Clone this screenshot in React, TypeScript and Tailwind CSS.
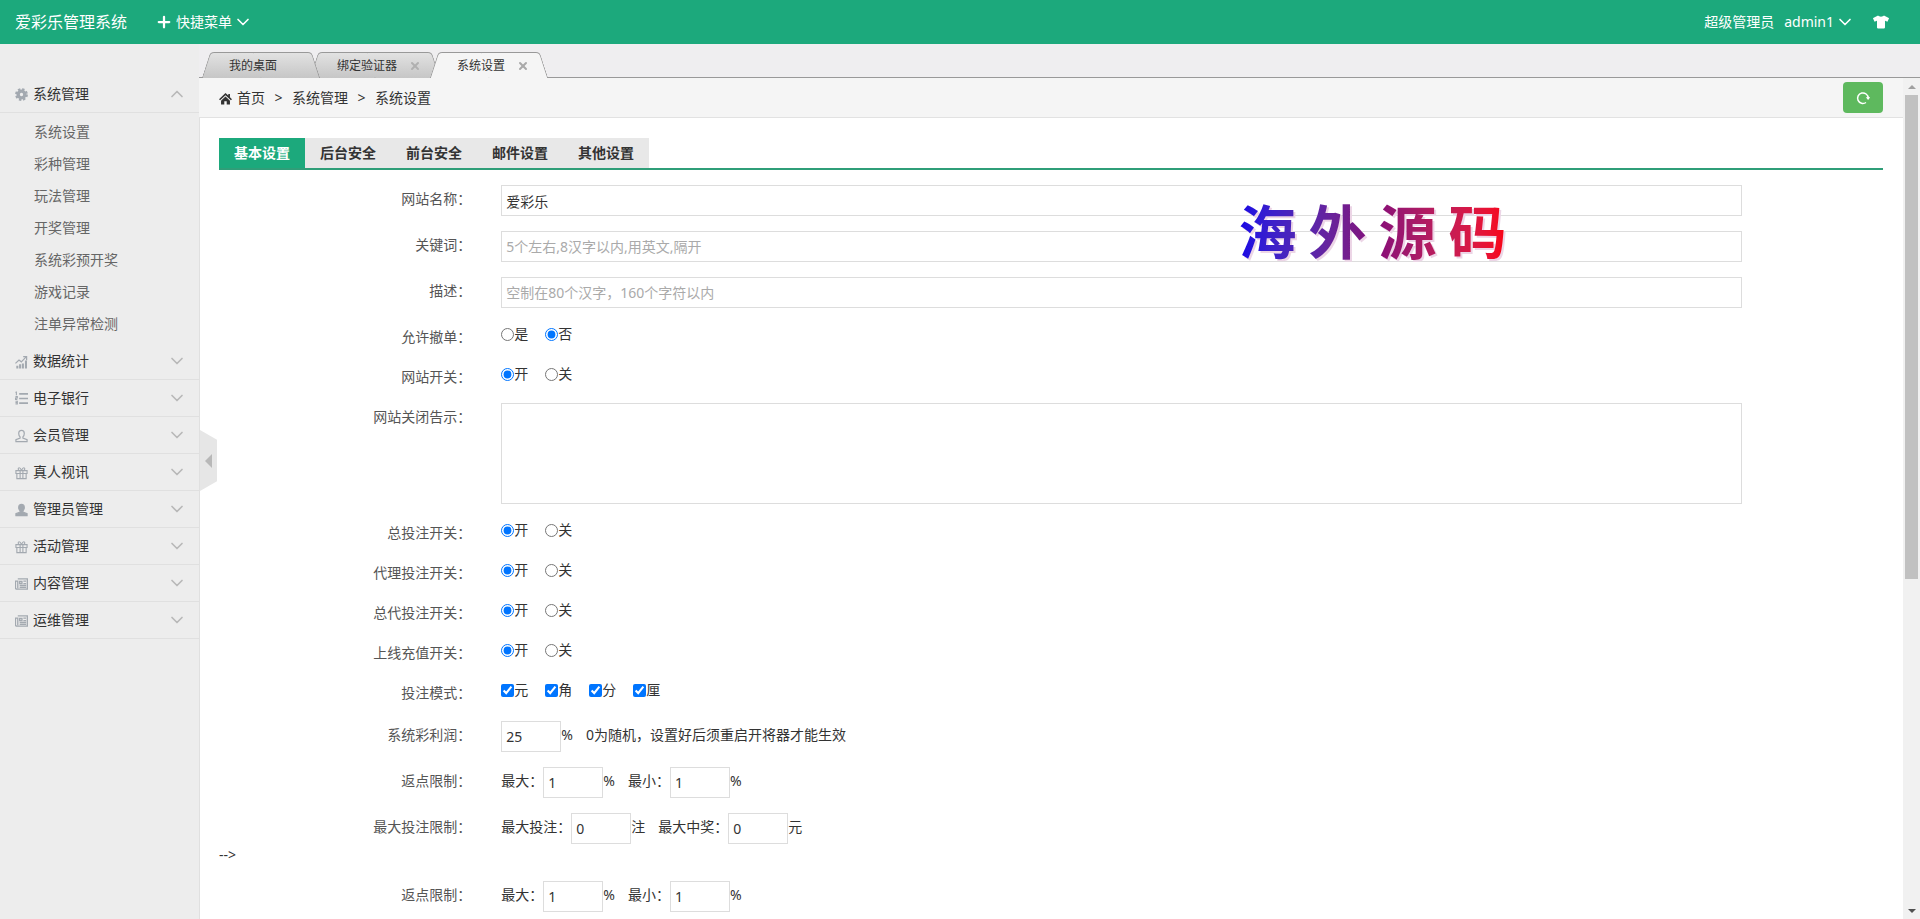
import React from "react";
import { ChevronDown, ChevronUp, Plus, X } from "lucide-react";
import { FaTshirt } from "react-icons/fa";

const submenu = ["系统设置", "彩种管理", "玩法管理", "开奖管理", "系统彩预开奖", "游戏记录", "注单异常检测"];

function GearIcon() {
  return (
    <svg viewBox="0 0 14 14" className="mt-px size-[13px]" fill="none" stroke="currentColor">
      <circle cx="7" cy="7" r="3.600" strokeWidth="3.600" />
      <circle cx="7" cy="7" r="5.800" strokeWidth="2.200" strokeDasharray="2.600 1.950" />
    </svg>
  );
}

function HomeIcon() {
  return (
    <svg viewBox="0 0 14 14" className="mt-px h-[13px] w-[13px]" fill="currentColor">
      <path d="M7 1 0 7.800l1.200 1.100L7 3.400l5.800 5.500L14 7.800l-2.200-2.100V2.200H10v1.700z" />
      <path d="M7 4.800 2.200 9.300V13.500H5.700V10h2.600v3.500h3.500V9.300z" />
    </svg>
  );
}

function StatsIcon() {
  return (
    <svg viewBox="0 0 14 14" className="mt-[2px] h-[14px] w-[13px]" fill="none" stroke="currentColor">
      <path d="M2.500 14v-3M5.500 14V9.500M8.500 14V8.500M11.800 14V5.500" strokeWidth="2.200" />
      <path d="M.5 8.500 4.300 4.800l2.500 2L12 1.500M8.800 1.200h3.700V5" strokeWidth="1.300" />
    </svg>
  );
}

function ListIcon() {
  return (
    <svg viewBox="0 0 14 14" className="h-[14px] w-[13px]" fill="none" stroke="currentColor">
      <path d="M4.500 2.500H14M4.500 7.500H14M4.500 12.500H14" strokeWidth="1.800" />
      <path d="M1.500 0v4M.5 1h1M.5 5.500h2v1.500h-2v1.500h2M.5 10.500h2v3h-2M.5 12h2" strokeWidth="1.200" />
    </svg>
  );
}

function UserIcon({ filled = false }: { filled?: boolean }) {
  return (
    <svg viewBox="0 0 14 14" className="mt-[2px] h-[14px] w-[13px]" fill={filled ? "currentColor" : "none"} stroke="currentColor" strokeWidth="1.300">
      <path d="M7 1C5 1 4 2.300 4 4.200c0 1.800.7 3 1.500 3.800v1.300L1 11v2h12v-2L8.500 9.300V8C9.300 7.200 10 6 10 4.200 10 2.300 9 1 7 1Z" />
    </svg>
  );
}

function GiftIcon() {
  return (
    <svg viewBox="0 0 14 14" className="mt-[2px] h-[14px] w-[13px]" fill="none" stroke="currentColor" strokeWidth="1.200">
      <path d="M1 4.500h12v3H1zM2 7.500h10V13H2zM5.500 4.500V13M8.500 4.500V13" />
      <path d="M7 4.300C6 1.800 5.300 1.300 4.500 1.300 3.200 1.300 3 3.500 4.500 4.300M7 4.300c1-2.500 1.700-3 2.500-3 1.300 0 1.500 2.200 0 3" />
    </svg>
  );
}

function NewsIcon() {
  return (
    <svg viewBox="0 0 14 14" className="mt-[2px] h-[14px] w-[13px]" fill="none" stroke="currentColor" strokeWidth="1.400">
      <path d="M3 1.500h10.300v11H2c-1 0-1.500-.5-1.500-1.500V4H3v7.500" />
      <path d="M5 4.300h2.500v2.200H5zM9 4h3M9 6.500h3M5 8.500h7M5 10.500h7" />
    </svg>
  );
}

const menus = [
  { title: "数据统计", icon: <StatsIcon /> },
  { title: "电子银行", icon: <ListIcon /> },
  { title: "会员管理", icon: <UserIcon /> },
  { title: "真人视讯", icon: <GiftIcon /> },
  { title: "管理员管理", icon: <UserIcon filled /> },
  { title: "活动管理", icon: <GiftIcon /> },
  { title: "内容管理", icon: <NewsIcon /> },
  { title: "运维管理", icon: <NewsIcon /> },
];

function Header() {
  return (
    <header className="flex h-11 shrink-0 items-center bg-[#1ca97c] pr-[31px] pl-[15px] text-white">
      <h1 className="text-base">爱彩乐管理系统</h1>
      <button className="ml-7 flex items-center">
        <Plus size={18} strokeWidth={3} />
        <span className="ml-[3px]">快捷菜单</span>
        <ChevronDown className="ml-px" size={20} strokeWidth={2} />
      </button>
      <div className="ml-auto flex items-center">
        <span>超级管理员</span>
        <button className="ml-[10px] flex items-center">
          admin1
          <ChevronDown className="ml-px" size={20} strokeWidth={2} />
        </button>
        <button className="ml-[18px]" aria-label="换肤">
          <FaTshirt size={16} />
        </button>
      </div>
    </header>
  );
}

function Sidebar() {
  return (
    <aside className="w-[200px] shrink-0 border-r border-[#e0e0e0] bg-[#ededed] pt-8">
      <button className="flex h-[37px] w-full items-center border-b border-[#e0e0e0] pr-3 pl-[15px]">
        <span className="text-[#a3a9b0]"><GearIcon /></span>
        <span className="ml-[5px]">系统管理</span>
        <ChevronUp className="ml-auto text-[#b8b8b8]" size={20} strokeWidth={2} />
      </button>
      <ul className="py-[3px]">
        {submenu.map((item) => (
          <li key={item}>
            <a href="#" className="block pl-[34px] leading-8 text-[#666]">{item}</a>
          </li>
        ))}
      </ul>
      {menus.map((menu) => (
        <button key={menu.title} className="flex h-[37px] w-full items-center border-b border-[#e0e0e0] pr-3 pl-[15px]">
          <span className="text-[#a3a9b0]">{menu.icon}</span>
          <span className="ml-[5px]">{menu.title}</span>
          <ChevronDown className="ml-auto text-[#b8b8b8]" size={20} strokeWidth={2} />
        </button>
      ))}
    </aside>
  );
}

type PageTabProps = { title: string; closable?: boolean; active?: boolean; first?: boolean };

function PageTab({ title, closable, active, first }: PageTabProps) {
  const fill = active
    ? "bg-[#f5f5f5] border-[#999]"
    : "bg-linear-to-b from-[#e2e2e2] to-[#c6c6c6] border-[#999]";
  return (
    <li className={`relative -mr-[10px] flex h-[26px] items-center pt-[2px] pl-[27px] text-xs ${first || active ? "z-10" : ""} ${closable ? "pr-[19px]" : "pr-[43px]"}`}>
      <span className={`absolute inset-y-0 left-1 w-1/2 -skew-x-18 rounded-tl border-t border-l ${fill}`} />
      <span className={`absolute inset-y-0 right-1 w-1/2 skew-x-18 rounded-tr border-t border-r ${fill}`} />
      <span className="relative">{title}</span>
      {closable && (
        <button className={`relative ml-3 ${active ? "text-[#aaa]" : "text-[#b0b0b0]"}`} aria-label="关闭">
          <X size={12} strokeWidth={4} />
        </button>
      )}
    </li>
  );
}

function Breadcrumb() {
  return (
    <nav className="flex h-10 items-center border-b border-[#e2e2e2] bg-[#f5f5f5] px-5">
      <HomeIcon />
      <a href="#" className="ml-[5px]">首页</a>
      <span className="w-[27px] text-center">&gt;</span>
      <span>系统管理</span>
      <span className="w-[27px] text-center">&gt;</span>
      <span>系统设置</span>
      <button className="ml-auto flex h-[31px] w-10 items-center justify-center rounded bg-[#5eb95e] text-white" aria-label="刷新">
        <svg viewBox="0 0 14 14" className="h-[14px] w-[14px]" fill="none" stroke="currentColor" strokeWidth="1.500">
          <path d="M10 11.500A5.300 5.300 0 1 1 12.200 7" />
          <path d="M9.800 6.200h4.400L12.100 9z" fill="currentColor" stroke="none" />
        </svg>
      </button>
    </nav>
  );
}

type RowProps = { label: string; id?: string; children: React.ReactNode };

function Row({ label, id, children }: RowProps) {
  return (
    <div className="-mx-[15px] mt-[15px] flex">
      <div className="w-1/6 px-[15px] pt-[3px] text-right text-[#555]">
        <label htmlFor={id}>{label}：</label>
      </div>
      <div className="w-3/4 px-[15px]">{children}</div>
    </div>
  );
}

function TextRow({ label, id, value, placeholder }: { label: string; id: string; value?: string; placeholder?: string }) {
  return (
    <Row label={label} id={id}>
      <input
        id={id}
        type="text"
        defaultValue={value}
        placeholder={placeholder}
        className="block h-[31px] w-full border border-[#ddd] px-1 placeholder:text-[#aaa]"
      />
    </Row>
  );
}

function RadioRow({ label, name, options = ["开", "关"], checked = 0 }: { label: string; name: string; options?: string[]; checked?: number }) {
  return (
    <Row label={label}>
      <div className="flex gap-[17px]" role="radiogroup" aria-label={label}>
        {options.map((option, i) => (
          <label key={option} className="flex items-center">
            <input type="radio" name={name} defaultChecked={i === checked} className="size-[13px]" />
            {option}
          </label>
        ))}
      </div>
    </Row>
  );
}

type Field = { before?: string; value: string; after: string };

function NumberRow({ label, fields, hint }: { label: string; fields: Field[]; hint?: string }) {
  return (
    <Row label={label}>
      <div className="flex gap-[13px]">
        {fields.map((field, i) => (
          <label key={i} className="flex">
            {field.before && <span className="pt-[3px]">{field.before}：</span>}
            <input type="text" defaultValue={field.value} className="h-[31px] w-[60px] border border-[#ddd] px-1" />
            <span className="pt-[3px]">{field.after}</span>
          </label>
        ))}
        {hint && <span className="pt-[3px]">{hint}</span>}
      </div>
    </Row>
  );
}

function SettingsForm() {
  return (
    <form className="relative px-5 pt-5">
      <div className="flex border-b-2 border-[#2f9e78] font-bold" role="tablist">
        <button type="button" role="tab" className="h-[30px] bg-[#1ca97c] px-[15px] text-white">基本设置</button>
        {["后台安全", "前台安全", "邮件设置", "其他设置"].map((tab) => (
          <button type="button" role="tab" key={tab} className="h-[30px] bg-[#e8e8e8] px-[15px]">{tab}</button>
        ))}
      </div>

      <TextRow label="网站名称" id="site-name" value="爱彩乐" />
      <TextRow label="关键词" id="keywords" placeholder="5个左右,8汉字以内,用英文,隔开" />
      <TextRow label="描述" id="description" placeholder="空制在80个汉字，160个字符以内" />
      <RadioRow label="允许撤单" name="cancel" options={["是", "否"]} checked={1} />
      <RadioRow label="网站开关" name="site" />
      <Row label="网站关闭告示" id="notice">
        <textarea id="notice" className="block h-[101px] w-full resize-none border border-[#ddd] p-1" />
      </Row>
      <RadioRow label="总投注开关" name="bet" />
      <RadioRow label="代理投注开关" name="agent" />
      <RadioRow label="总代投注开关" name="general" />
      <RadioRow label="上线充值开关" name="recharge" />
      <Row label="投注模式">
        <div className="flex gap-[17px] pb-[5px]">
          {["元", "角", "分", "厘"].map((unit) => (
            <label key={unit} className="flex items-center">
              <input type="checkbox" defaultChecked className="size-[13px]" />
              {unit}
            </label>
          ))}
        </div>
      </Row>
      <NumberRow label="系统彩利润" fields={[{ value: "25", after: "%" }]} hint="0为随机，设置好后须重启开将器才能生效" />
      <NumberRow label="返点限制" fields={[{ before: "最大", value: "1", after: "%" }, { before: "最小", value: "1", after: "%" }]} />
      <NumberRow label="最大投注限制" fields={[{ before: "最大投注", value: "0", after: "注" }, { before: "最大中奖", value: "0", after: "元" }]} />
      <p>--&gt;</p>
      <NumberRow label="返点限制" fields={[{ before: "最大", value: "1", after: "%" }, { before: "最小", value: "1", after: "%" }]} />

      <div className="pointer-events-none absolute top-20 left-[61%] flex gap-3 bg-linear-to-r from-[#1500e6] via-[#84087a] to-[#fb0008] bg-clip-text text-[58px] leading-[68px] font-bold text-transparent drop-shadow-[2px_2px_0_#ecd5e6]">
        {["海", "外", "源", "码"].map((char) => (
          <span key={char}>{char}</span>
        ))}
      </div>
    </form>
  );
}

function Scrollbar() {
  return (
    <div className="flex w-[17px] shrink-0 flex-col items-center bg-[#f1f1f1]">
      <div className="flex h-[17px] shrink-0 items-center">
        <span className="border-x-4 border-b-4 border-x-transparent border-b-[#a0a0a0]" />
      </div>
      <div className="min-h-0 w-full flex-1 px-[2px]">
        <div className="h-3/5 bg-[#c1c1c1]" />
      </div>
      <div className="flex h-[17px] shrink-0 items-center">
        <span className="border-x-4 border-t-4 border-x-transparent border-t-[#505050]" />
      </div>
    </div>
  );
}

export default function App() {
  return (
    <div className="flex h-screen flex-col overflow-hidden bg-white font-['Noto_Sans','Noto_Sans_CJK_SC',sans-serif] text-sm leading-[22px] text-[#333]" lang="zh-CN">
      <Header />
      <div className="flex min-h-0 flex-1">
        <Sidebar />
        <main className="relative -ml-px flex min-w-0 flex-1 flex-col">
          <div className="flex h-[34px] shrink-0 items-end border-b border-[#999] bg-[#efeef0]">
            <ul className="-mb-px flex pl-[3px]">
              <PageTab title="我的桌面" first />
              <PageTab title="绑定验证器" closable />
              <PageTab title="系统设置" closable active />
            </ul>
          </div>
          <div className="flex min-h-0 flex-1">
            <div className="min-w-0 flex-1 overflow-hidden">
              <Breadcrumb />
              <SettingsForm />
            </div>
            <Scrollbar />
          </div>
          <button className="absolute top-[386px] left-px flex h-[61px] w-[17px] items-center justify-center bg-[#e6e6e6] [clip-path:polygon(0_0,100%_16%,100%_84%,0_100%)]" aria-label="收起菜单">
            <span className="border-y-[7px] border-r-[7px] border-y-transparent border-r-[#b8b8b8]" />
          </button>
        </main>
      </div>
    </div>
  );
}
